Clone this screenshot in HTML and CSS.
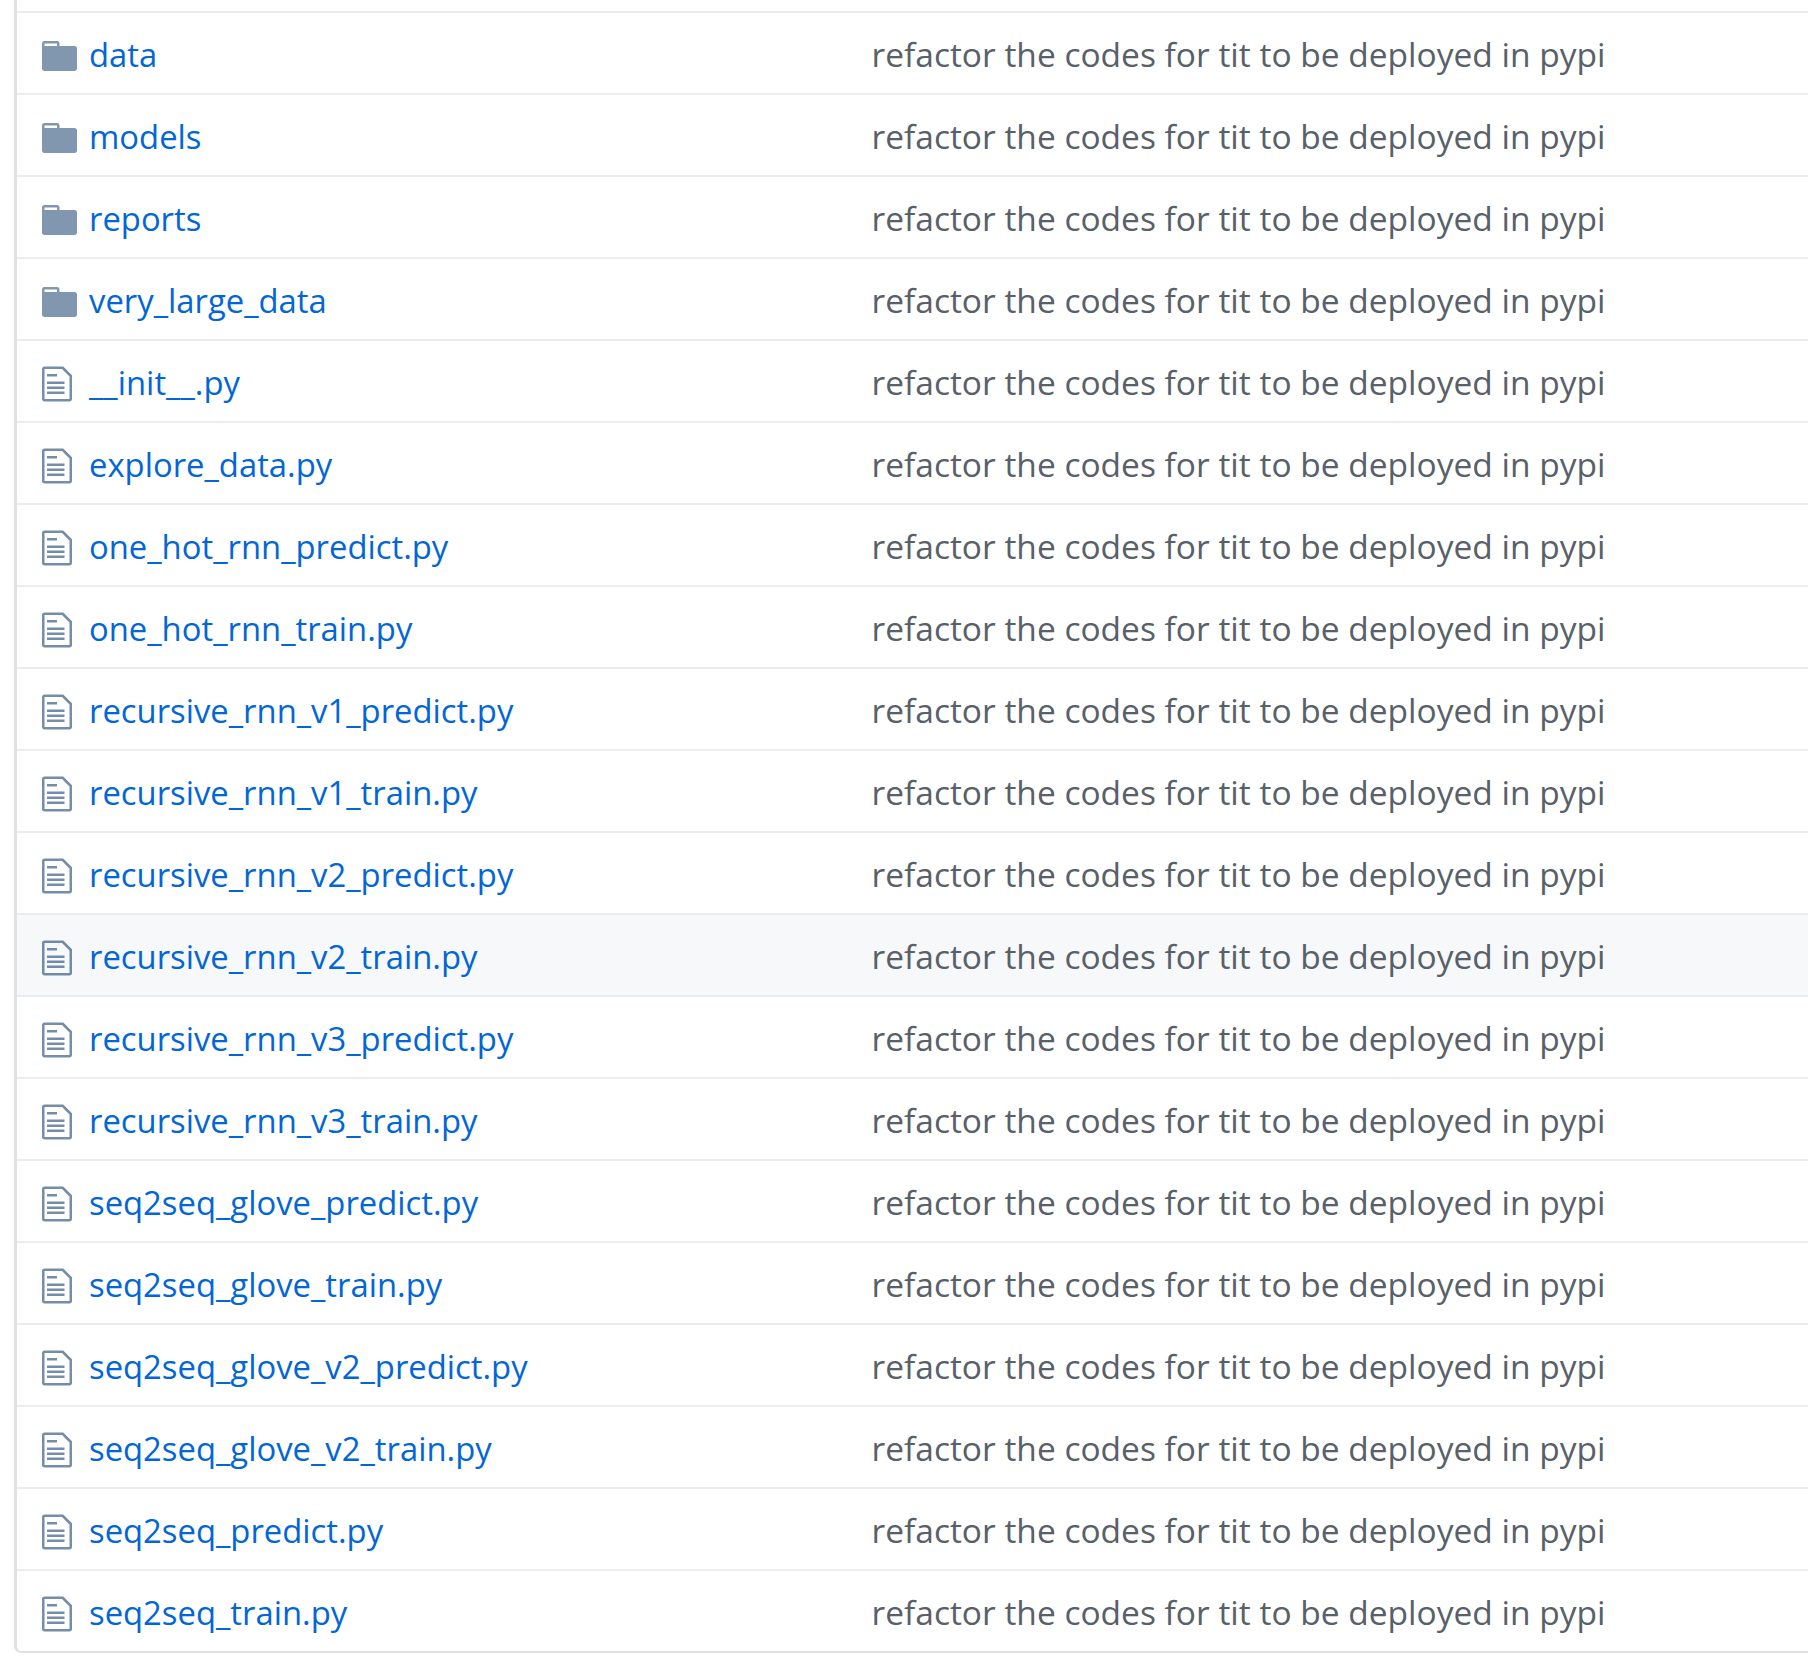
FILE: index.html
```html
<!DOCTYPE html>
<html lang="en">
<head>
<meta charset="utf-8">
<title>Files</title>
<link rel="stylesheet" href="styles.css">
</head>
<body>
<svg class="sprite" aria-hidden="true">
  <symbol id="dir" viewBox="0 0 14 16"><path fill-rule="evenodd" d="M13 4H7V3c0-.66-.31-1-1-1H1c-.55 0-1 .45-1 1v10c0 .55.45 1 1 1h12c.55 0 1-.45 1-1V5c0-.55-.45-1-1-1zM6 4H1V3h5v1z"/></symbol>
  <symbol id="file" viewBox="0 0 12 16"><path fill-rule="evenodd" d="M6 5H2V4h4v1zM2 8h7V7H2v1zm0 2h7V9H2v1zm0 2h7v-1H2v1zm10-7.5V14c0 .55-.45 1-1 1H1c-.55 0-1-.45-1-1V2c0-.55.45-1 1-1h7.5L12 4.5zM11 5L8 2H1v12h10V5z"/></symbol>
</svg>
<div class="files">
  <div class="stub"></div>
  <div class="row"><div class="icon"><svg class="ic-dir"><use href="#dir"/></svg></div><a class="name">data</a><span class="msg">refactor the codes for tit to be deployed in pypi</span></div>
  <div class="row"><div class="icon"><svg class="ic-dir"><use href="#dir"/></svg></div><a class="name">models</a><span class="msg">refactor the codes for tit to be deployed in pypi</span></div>
  <div class="row"><div class="icon"><svg class="ic-dir"><use href="#dir"/></svg></div><a class="name">reports</a><span class="msg">refactor the codes for tit to be deployed in pypi</span></div>
  <div class="row"><div class="icon"><svg class="ic-dir"><use href="#dir"/></svg></div><a class="name">very_large_data</a><span class="msg">refactor the codes for tit to be deployed in pypi</span></div>
  <div class="row"><div class="icon"><svg class="ic-file"><use href="#file"/></svg></div><a class="name">__init__.py</a><span class="msg">refactor the codes for tit to be deployed in pypi</span></div>
  <div class="row"><div class="icon"><svg class="ic-file"><use href="#file"/></svg></div><a class="name">explore_data.py</a><span class="msg">refactor the codes for tit to be deployed in pypi</span></div>
  <div class="row"><div class="icon"><svg class="ic-file"><use href="#file"/></svg></div><a class="name">one_hot_rnn_predict.py</a><span class="msg">refactor the codes for tit to be deployed in pypi</span></div>
  <div class="row"><div class="icon"><svg class="ic-file"><use href="#file"/></svg></div><a class="name">one_hot_rnn_train.py</a><span class="msg">refactor the codes for tit to be deployed in pypi</span></div>
  <div class="row"><div class="icon"><svg class="ic-file"><use href="#file"/></svg></div><a class="name">recursive_rnn_v1_predict.py</a><span class="msg">refactor the codes for tit to be deployed in pypi</span></div>
  <div class="row"><div class="icon"><svg class="ic-file"><use href="#file"/></svg></div><a class="name">recursive_rnn_v1_train.py</a><span class="msg">refactor the codes for tit to be deployed in pypi</span></div>
  <div class="row"><div class="icon"><svg class="ic-file"><use href="#file"/></svg></div><a class="name">recursive_rnn_v2_predict.py</a><span class="msg">refactor the codes for tit to be deployed in pypi</span></div>
  <div class="row hover"><div class="icon"><svg class="ic-file"><use href="#file"/></svg></div><a class="name">recursive_rnn_v2_train.py</a><span class="msg">refactor the codes for tit to be deployed in pypi</span></div>
  <div class="row"><div class="icon"><svg class="ic-file"><use href="#file"/></svg></div><a class="name">recursive_rnn_v3_predict.py</a><span class="msg">refactor the codes for tit to be deployed in pypi</span></div>
  <div class="row"><div class="icon"><svg class="ic-file"><use href="#file"/></svg></div><a class="name">recursive_rnn_v3_train.py</a><span class="msg">refactor the codes for tit to be deployed in pypi</span></div>
  <div class="row"><div class="icon"><svg class="ic-file"><use href="#file"/></svg></div><a class="name">seq2seq_glove_predict.py</a><span class="msg">refactor the codes for tit to be deployed in pypi</span></div>
  <div class="row"><div class="icon"><svg class="ic-file"><use href="#file"/></svg></div><a class="name">seq2seq_glove_train.py</a><span class="msg">refactor the codes for tit to be deployed in pypi</span></div>
  <div class="row"><div class="icon"><svg class="ic-file"><use href="#file"/></svg></div><a class="name">seq2seq_glove_v2_predict.py</a><span class="msg">refactor the codes for tit to be deployed in pypi</span></div>
  <div class="row"><div class="icon"><svg class="ic-file"><use href="#file"/></svg></div><a class="name">seq2seq_glove_v2_train.py</a><span class="msg">refactor the codes for tit to be deployed in pypi</span></div>
  <div class="row"><div class="icon"><svg class="ic-file"><use href="#file"/></svg></div><a class="name">seq2seq_predict.py</a><span class="msg">refactor the codes for tit to be deployed in pypi</span></div>
  <div class="row"><div class="icon"><svg class="ic-file"><use href="#file"/></svg></div><a class="name">seq2seq_train.py</a><span class="msg">refactor the codes for tit to be deployed in pypi</span></div>
</div>
</body>
</html>
```
FILE: styles.css
```css
html, body {
  margin: 0;
  padding: 0;
  background: #fff;
}
body {
  font-family: "Open Sans", "Noto Sans", sans-serif;
  overflow: hidden;
}
.sprite {
  display: none;
}
.files {
  margin-left: 14px;
  border-left: 3px solid #dfe2e5;
  border-bottom: 2px solid #dfe2e5;
  border-bottom-left-radius: 7px;
}
.stub {
  height: 11px;
}
.row {
  display: grid;
  grid-template-columns: 47px 782.5px 1fr;
  height: 80px;
  padding-left: 25px;
  border-top: 2px solid #eaecef;
}
.row.hover {
  background: #f6f8fa;
}
.icon {
  padding-top: 23px;
  color: rgba(3, 47, 98, 0.5);
  fill: currentColor;
}
.ic-dir {
  display: block;
  width: 35px;
  height: 40px;
}
.ic-file {
  display: block;
  width: 30px;
  height: 40px;
  fill: rgba(3, 47, 98, 0.55);
}
.name,
.msg {
  padding-top: 2px;
  line-height: 78px;
  white-space: nowrap;
}
.name {
  padding-top: 3px;
  font-size: 32.8px;
  color: #0366d6;
}
.msg {
  font-size: 33.5px;
  color: #586069;
}
```
